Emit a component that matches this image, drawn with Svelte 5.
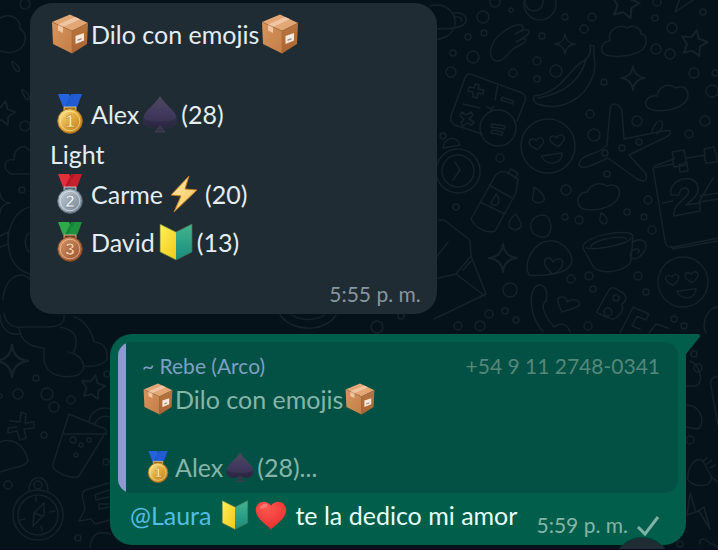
<script>
  const dots = [
    [483, 17, 6], [511, 10, 2], [468, 37, 3], [484, 33, 3], [453, 53, 3], [473, 57, 6], [451, 72, 5], [513, 73, 4],
    [542, 36, 3], [565, 17, 3], [592, 17, 4], [584, 29, 4], [537, 61, 4], [556, 71, 6], [537, 79, 3], [604, 82, 3],
    [655, 18, 3], [672, 28, 5], [703, 12, 3], [656, 49, 5], [670, 54, 5], [694, 73, 5], [712, 91, 6], [715, 73, 3],
    [590, 114, 4], [594, 135, 6], [637, 121, 5], [705, 121, 5], [689, 134, 4], [605, 153, 3], [622, 148, 3], [639, 142, 3],
    [500, 158, 4], [443, 136, 3], [456, 207, 3], [607, 174, 3], [566, 190, 5], [565, 217, 3], [579, 220, 4], [627, 212, 3],
    [648, 200, 4], [644, 217, 3], [652, 230, 4], [571, 279, 4], [589, 276, 4], [593, 289, 3], [638, 276, 4], [646, 292, 3],
    [510, 290, 7], [505, 311, 3], [489, 314, 4], [480, 326, 5], [458, 326, 4], [516, 320, 3], [588, 326, 4], [674, 319, 3],
    [684, 326, 3], [377, 327, 6], [401, 316, 3], [694, 354, 3], [698, 368, 4], [690, 440, 4], [680, 544, 3], [25, 4, 5],
    [25, 126, 5], [22, 190, 3], [36, 378, 3], [18, 394, 5], [47, 394, 6], [54, 407, 5], [71, 400, 4], [44, 435, 3],
    [8, 485, 4], [78, 538, 3], [107, 374, 3], [495, 2, 5], [657, 2, 4], [0, 396, 2], [106, 462, 3], [73, 440, 3], [81, 445, 2], [89, 440, 2], [76, 455, 2]
  ];
  const sparkles = [[565, 44, 10], [633, 78, 12], [503, 258, 14], [12, 361, 16], [0, 203, 10]];
  const stars = [[694, 43, 13], [625, 4, 14], [93, 387, 12], [3, 113, 12]];
  const faces = [[548, 146, 27], [683, 282, 25]];
</script>

{#snippet icon(name, cls)}
  <svg class="emoji {cls}" viewBox="0 0 40 40" aria-hidden="true"><use href="#{name}" /></svg>
{/snippet}

<svg class="defs" aria-hidden="true">
  <defs>
    <linearGradient id="g-left" x2="1" y2="1"><stop stop-color="#d7955d" /><stop offset="1" stop-color="#c47e47" /></linearGradient>
    <linearGradient id="g-right" x2="0" y2="1"><stop stop-color="#b8753f" /><stop offset="1" stop-color="#ad6533" /></linearGradient>
    <linearGradient id="g-gold" x2="1" y2="1"><stop stop-color="#fff0a0" /><stop offset=".5" stop-color="#e2a83b" /><stop offset="1" stop-color="#b9791d" /></linearGradient>
    <linearGradient id="g-silver" x2="1" y2="1"><stop stop-color="#c7d2dc" /><stop offset="1" stop-color="#71808e" /></linearGradient>
    <linearGradient id="g-bronze" x2="1" y2="1"><stop stop-color="#dc9868" /><stop offset="1" stop-color="#93502e" /></linearGradient>
    <linearGradient id="g-spade" x2="0" y2="1"><stop stop-color="#4f495c" /><stop offset=".55" stop-color="#41395e" /><stop offset="1" stop-color="#322e4a" /></linearGradient>
    <linearGradient id="g-bolt" x2="1" y2="1"><stop stop-color="#ffe9a6" /><stop offset=".6" stop-color="#fbd478" /><stop offset="1" stop-color="#e59b2f" /></linearGradient>
    <linearGradient id="g-yellow" x2="1" y2="1"><stop stop-color="#fff159" /><stop offset="1" stop-color="#f2c819" /></linearGradient>
    <linearGradient id="g-teal" x2="0" y2="1"><stop stop-color="#43b58f" /><stop offset="1" stop-color="#198b7d" /></linearGradient>
    <radialGradient id="g-heart" cx=".4" cy=".25" r=".85"><stop stop-color="#ff5750" /><stop offset="1" stop-color="#e52b2b" /></radialGradient>
    <symbol id="box" viewBox="0 0 40 40">
      <path d="M2 8 20 .5 38 9 22 17z" fill="#e3a675" />
      <path d="M2 8 22 17V39.5L3 30Z" fill="url(#g-left)" />
      <path d="M22 17 38 9 37 30 22 39.5z" fill="url(#g-right)" />
      <path d="M8 10.5 25 3l5 2.3-17 7.6v6L8 16.5z" fill="#f0c5a3" />
      <path d="m2 8 20 9L38 9M22 17v22" fill="none" stroke="#a96a3b" stroke-width=".6" />
      <path d="m25.500 22 8.500-3v7.500L25.500 30z" fill="#f7e9dc" />
      <path d="m27.500 25.500 4-1.500v1.500l-4 1.500z" fill="#9f8b7c" />
    </symbol>
    {#each [['gold', '1', '#1e59cf', '#2463dd', '#a76c18', '#fff0a8'], ['silver', '2', '#b71727', '#e2303a', '#586774', '#edf4f8'], ['bronze', '3', '#168437', '#2fa94c', '#78401f', '#ffd3ae']] as [id, n, dark, light, edge, ink]}
      <symbol {id} viewBox="0 0 40 40">
        <path d="M8 0h11l6 13H13z" fill={light} />
        <path d="M21 0h11l-5 13H15z" fill={dark} />
        <path d="m19 0 3 6 3-6h7l-5 13h-9l3-6-3-7z" fill={light} opacity=".35" />
        <path d="M14 13h12v3H14z" fill={edge} stroke={ink} stroke-width=".7" />
        <circle cx="20" cy="27" r="12.300" fill="url(#g-{id})" stroke={edge} />
        <circle cx="20" cy="27" r="9.800" fill="none" stroke={ink} stroke-width=".8" opacity=".75" />
        <text x="20" y="33" text-anchor="middle" font-size="17" font-weight="700" font-family="Liberation Sans, sans-serif" fill={ink} stroke={edge} stroke-width=".4">{n}</text>
      </symbol>
    {/each}
    <symbol id="spade" viewBox="0 0 40 40">
      <path d="M20 28c1 5 2 7 5 10H15c3-3 4-5 5-10z" fill="#34334a" stroke="#4b475c" stroke-width=".6" />
      <path d="M20 2c4 8 17 15 17 24 0 8-10 10-17 5-7 5-17 3-17-5C3 17 16 10 20 2z" fill="url(#g-spade)" />
      <path d="M3 24c7 5 27 5 34 0 1 9-10 12-17 7-7 5-18 2-17-7z" fill="#211e36" opacity=".4" />
    </symbol>
    <symbol id="bolt" viewBox="0 0 40 40">
      <path d="M25 2 7 21l10 1-7 16 23-22-12-1z" fill="url(#g-bolt)" stroke="#c57a21" stroke-width="1" />
    </symbol>
    <symbol id="badge" viewBox="0 0 40 40">
      <path d="m4 2 16 8v28L4 30z" fill="url(#g-yellow)" />
      <path d="m36 2-16 8v28l16-8z" fill="url(#g-teal)" />
      <path d="m4 2 16 8 16-8v28l-16 8-16-8z" fill="none" stroke="#4e6b48" stroke-width=".7" />
    </symbol>
    <symbol id="heart" viewBox="0 0 40 40">
      <path d="M20 8C13-1 0 4 1 15c1 10 12 16 19 23 7-7 18-13 19-23C40 4 27-1 20 8z" fill="url(#g-heart)" />
      <ellipse cx="11" cy="9" rx="5" ry="2.500" transform="rotate(-25 11 9)" fill="#ff8b83" opacity=".7" />
    </symbol>
  </defs>
</svg>

<main>
  <svg class="wallpaper" viewBox="0 0 718 550" preserveAspectRatio="xMinYMin slice" aria-hidden="true">
    {#each dots as [x, y, r]}<circle cx={x} cy={y} {r} />{/each}
    {#each sparkles as [x, y, s]}
      <path transform="translate({x} {y}) scale({s / 10})" d="M0-10Q1-1 10 0Q1 1 0 10Q-1 1-10 0Q-1-1 0-10z" />
    {/each}
    {#each stars as [x, y, s]}
      <path transform="translate({x} {y}) rotate(12) scale({s / 10})" d="m0-10 3 6 7 1-5 5 1 7-6-3-6 3 1-7-5-5 7-1z" />
    {/each}
    {#each faces as [x, y, r]}
      <g transform="translate({x} {y}) rotate(-8) scale({r / 27})">
        <circle r="27" />
        <path d="M-11 2c-5-3-8-6-7-9s5-3 7 0c2-3 6-3 7 0s-2 6-7 9zm21 0c-5-3-8-6-7-9s5-3 7 0c2-3 6-3 7 0s-2 6-7 9zM-8 9h21C12 20-4 21-8 9z" />
      </g>
    {/each}
    <path d="M430 6c16-4 26 7 25 18-2 12-14 17-25 15M454 13c8-1 13 3 12 8-2 8-17 8-36 8M454 17c6-1 9 2 7 4" />
    <circle cx="540" cy="4" r="16" /><circle cx="534" cy="2" r="9" /><path d="m675 12 21-14m-21 14 5-14" />
    <path d="M493 59c-6-6-1-19 10-27 8-6 18-10 20-5 1 3-8 7-8 7s12-7 14-3-13 11-13 11 10-6 10-2-11 6-15 11c-6 7-13 14-18 8z" />
    <path d="M606 55c-8-4-4-14 4-14-3-10 8-18 17-13 6-4 14 0 14 6 6 0 7 9 2 15-7 7-28 9-37 6zM647 107c-4-6 2-12 10-11 2-11 12-13 19-8 6-3 12 0 12 7 0 15-34 20-41 12z" />
    <path d="M590 45c2 8-1 13-8 17-13 7-20 31-48 34-2 2 0 5 3 8 24 8 48-5 56-28 5-14-1-19 1-30zM538 98c24-4 41-15 48-38" />
    <path d="M482 134l-27-9c-4-2-5-5-4-9l14-38c1-4 4-5 8-3l44 16c7 2 10 5 8 10l-8 20" />
    <circle cx="498" cy="128" r="18" />
    <path d="m492 124 13 2-1 3-13-2zm0 6 11 2-1 3-11-2zM475 84l4 1-1 4 6 1-1 4-5-1-1 5-4-1v-5l-5-1 1-4 5 1zM462 112l4 3 5-3 2 3-4 4 5 3-2 3-5-2-4 3-2-3 3-4-4-3zM502 97l11 4v3l-12-4zM498 84l-3 16m-1 6-4 6M480 108l-17-4m24 3 5 2" />
    <path d="M443 148c1-11 14-13 17-3z" />
    <circle cx="458" cy="171" r="22" /><circle cx="458" cy="171" r="16" /><path d="m455 162 5 8-7 10" />
    <path d="m607 145 3-35c0-8 9-8 12 1l2 28 39-8c9-2 10 2 3 6l-37 18 17 19c2 8-3 8-9 5l-29-21-18 8c-9 3-14 0-9-6 5-7 22-7 26-15zM652 132c1-7 8-14 10-10s-2 9-5 12M654 166l20-7-2-7 12-2 3 15-13 2-1-6M687 158l18-3-1-6 10-2 4 15-12 1-2-7" />
    <path d="M653 168l12 73c1 5 4 7 9 6l44-9M653 168l20-4M663 203l10-2m27-5 18-3M671 246l2 3 45-8m-39-76 8-3 1 9-8 1zM671 195c-3-14 19-23 26-11 4 10-4 15-11 21l14-2v8l-26 5c-2-10 10-16 14-22 3-8-9-8-9 1zM713 178l-14 24 19-3" />
    <path d="m471 219 24-43c4-5 9-6 15-2l8 5-2 14-21 38c-8 3-20-3-24-12zM480 202l25 12M489 185l23 13M508 174l3-5 7 4-3 6M493 205c-5-2 2-7 3-11 4 4 4 13-3 11z" />
    <path d="M515 230c-11-2-5-12 1-16 4 7 10 14-1 16zM538 203c-10-2-3-9-4-16 7 4 17 15 4 16zM604 224c-7-2-3-7-3-11 5 2 9 10 3 11zM533 233c-6-8 0-18 10-18 11 1 10 24 0 22-5 0-8-2-10-4z" />
    <path d="M581 208c-7-8-1-16 6-16 4-9 14-10 20-6 9-3 14 2 12 10-6 14-28 16-38 12zM583 248c-2-13 52-21 50-11l-2 22c0 13-33 17-38 7zM586 248c11 3 44-5 45-10M591 248c-3-8 35-14 35-9M632 243c8-7 17-1 13 7s-13 13-15 4c3-7 12-6 8-1" />
    <path d="M529 275c-6-12 4-33 20-34 15-2 29 18 20 26-4 6-26 10-40 8zM553 274c-17-12-4-22 0-12 8-9 15 2 4 10z" />
    <path d="m430 220 14 0 26 20 1 16 15 38-52 25M430 280l26-6 29 22M456 274l15-18M463 270l8-9M435 259l13-17" />
    <path d="M543 332c-14-17-14-37-8-45 7-6 14 2 11 14-8 5 3 21 8 26 8-6 14-2 16 5M562 312c-4-8-7-15 0-15 5 0 5 5 5 5 8-6 20 2 7 6z" />
    <path d="m597 311 12-21c2-3 4-3 7-1l7 4c4 3 4 8-1 11 2 5-1 10-5 13-2 2-5 3-8 1l-9-4c-3-1-4-2-3-3z" />
    <circle cx="616" cy="298" r="3" /><circle cx="608" cy="312" r="4" />
    <path d="m620 333 13-26 16 7-3 6-9-4-5 10 8 3M649 333l7-9 12 4M706 333c-6-12 4-27 12-26" />
    <path d="M0 18c12-6 21 2 20 11 8 4 6 15 0 20-6 4-14 4-20 2M14 68c-4-9-2-8 4-2 4 7-1 7-4 2zm10 28c-4-9-2-8 4-2 4 7-1 7-4 2zM11 174c-11-7-5-16 3-14 0-14 11-16 15-10M11 174h18M29 207c-27 8-29 60 1 67M29 233c-5 4-5 13 0 19M3 300c1-21 16-31 27-21M0 236l8-4v12l-8 3" />
    <path d="M0 315c0 12 8 21 19 19M4 313c2 12 9 15 20 14h25c13-1 16-5 15-12M19 327c1 15 12 20 25 21M60 327c18 3 18 14 14 25M44 348v12c2 16 20 19 34 15 10-6 6-20-10-23M74 317c10 2 18 15 20 25 12 1 14 10 13 18-6 6-14 7-23 6M280 315c12 17 45 18 56 0M292 315c9 6 24 6 32 0" />
    <path d="M10 421l10 1 1-10 5 2-1 9 9-1v6l-10 1 2 9-6 2-3-9-9 2v-5l9-1M0 442c13-5 25 3 28 19-2 5-12 6-28 11M69 414l34 14c4 1 4 4 1 7l-25 41c-4 5-29-4-26-12zM63 434h44M89 421c2-10 12-15 21-12M95 423c4-6 9-8 15-6" />
    <circle cx="38" cy="515" r="25" /><circle cx="38" cy="515" r="20" /><circle cx="38" cy="485" r="4" />
    <path d="M29 491c0-18 19-18 19 0M33 526l1-13 10-10v12zM34 513l8 3M36 497v5M20 520l5-1M55 511l-5 1M42 530l-1-4" />
    <path d="m109 483-20 6c-6 1-8 4-6 11l2 9-6 12 12-2 4 5 15-4M109 490l-14 5 1 5 13-3M109 504h-10v5l10-2M90 547c2-15 10-16 20-13M686 386h8c10 0 8-20-4-25M686 405c18 0 19 22 11 24l-11-2M718 376c-7 2-8 4-7 10l7 39M688 480c-1-14 8-24 15-19l8 15c3 12-17 12-23 4zM703 461l4-3m0 6 5-4m-2 8 5-3M711 477l7 5M690 493l-3 22 12-4 11 18-6-22-8 5z" />
    <path d="M700 544c-2-7 7-6 10 0 4-1 6 2 8 4" />
  </svg>

  <article class="bubble incoming">
    <p class="line">{@render icon('box', '')}<span>Dilo con emojis</span>{@render icon('box', '')}</p>
    <p class="line"></p>
    <p class="line">{@render icon('gold', '')}<span>Alex</span>{@render icon('spade', '')}<span>(28)</span></p>
    <p class="line">Light</p>
    <p class="line">{@render icon('silver', '')}<span>Carme</span>{@render icon('bolt', '')}<span>(20)</span></p>
    <p class="line last">{@render icon('bronze', '')}<span>David</span>{@render icon('badge', '')}<span>(13)</span></p>
    <time>5:55 p. m.</time>
  </article>

  <article class="bubble outgoing">
    <svg class="tail" viewBox="0 0 28 24" aria-hidden="true"><path d="M0 0h25q5 0 2 4L14 20v4H0z" fill="#005e4b" /></svg>
    <blockquote>
      <header><span class="name">~ Rebe (Arco)</span><span class="phone">+54 9 11 2748-0341</span></header>
      <p class="line small">{@render icon('box', '')}<span>Dilo con emojis</span>{@render icon('box', '')}</p>
      <p class="line small"></p>
      <p class="line small">{@render icon('gold', '')}<span>Alex</span>{@render icon('spade', '')}<span>(28)...</span></p>
    </blockquote>
    <footer>
      <p class="reply"><a href="#laura">@Laura</a>{@render icon('badge', 'first')}{@render icon('heart', '')}<span>te la dedico mi amor</span></p>
      <div class="status">
        <time>5:59 p. m.</time>
        <svg class="check" viewBox="0 0 24 22" aria-label="Enviado" role="img"><path d="m2 12 7 7L22 2" fill="none" stroke="#80b1a5" stroke-width="3" /></svg>
      </div>
    </footer>
  </article>
  <div class="knob"></div>
</main>

<style>
  :global(body) { background: #06121a; }
  main {
    position: relative;
    box-sizing: border-box;
    min-height: 100vh;
    padding: 3px 32px 4px 30px;
    display: flex;
    flex-direction: column;
    gap: 20px;
    overflow: hidden;
    background: #06121a;
    border-bottom: 1px solid #10051b;
    font-family: Lato, "Liberation Sans", sans-serif;
    font-size: 25px;
    color: #e3edf2;
  }
  p, blockquote { margin: 0; }
  .defs { position: absolute; width: 0; height: 0; }
  .wallpaper {
    position: absolute;
    inset: 0;
    width: 100%;
    height: 100%;
    fill: none;
    stroke: #152229;
    stroke-width: 1.5;
    stroke-linejoin: round;
    stroke-linecap: round;
  }
  .bubble { position: relative; box-sizing: border-box; border-radius: 22px; }
  .incoming {
    width: 62%;
    padding: 11px 16px 8px 20px;
    background: #202c33;
    display: flex;
    flex-direction: column;
  }
  .line { display: flex; align-items: center; gap: 1px; height: 40px; line-height: 28px; white-space: nowrap; }
  .line.last { margin-top: 8px; }
  .emoji { width: 40px; height: 40px; flex: none; }
  .incoming time {
    align-self: flex-end;
    margin-top: 20px;
    font-size: 21px;
    line-height: 24px;
    color: #8696a0;
  }
  .outgoing { margin-left: 80px; padding: 8px; background: #005e4b; border-radius: 22px 0 22px 22px; }
  .tail { position: absolute; top: 0; right: -14px; width: 28px; height: 24px; }
  blockquote {
    position: relative;
    padding: 10px 18px 9px 24px;
    border-radius: 14px;
    background: linear-gradient(to right, #8b9bd2 8px, #025144 8px);
    color: #86b5a8;
  }
  header { display: flex; justify-content: space-between; margin-bottom: 2px; font-size: 21px; line-height: 28px; color: #7f9fc2; }
  .phone { color: #568779; }
  .line.small { height: 34px; }
  .small .emoji { width: 32px; height: 32px; }
  footer { display: flex; justify-content: space-between; height: 44px; padding: 0 18px 0 12px; white-space: nowrap; }
  .reply { display: flex; align-items: center; gap: 4px; color: #e6fff7; }
  .reply .emoji { width: 32px; height: 32px; }
  .reply .first { margin-left: 4px; }
  .reply span { margin-left: 4px; }
  .reply a { color: #52bde0; text-decoration: none; }
  .status { display: flex; align-items: flex-end; gap: 8px; font-size: 21px; line-height: 24px; color: #85b5a8; }
  .check { width: 24px; height: 22px; }
  .knob {
    position: absolute;
    right: 48px;
    bottom: -42px;
    width: 56px;
    height: 54px;
    border-radius: 50%;
    background: #202c33;
    border: 1px solid #063d35;
    box-sizing: border-box;
  }
</style>
